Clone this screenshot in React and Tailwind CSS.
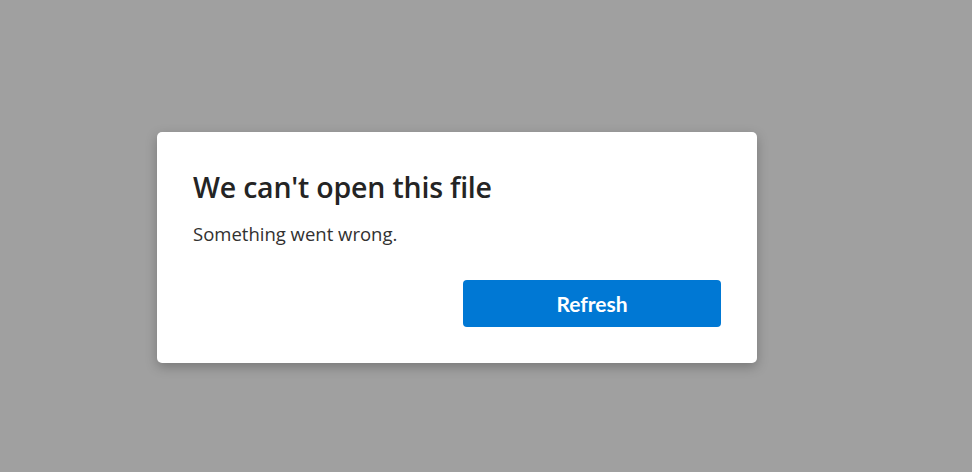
export default function App() {
  return (
    <div className="w-[972px] h-[472px] bg-[#a0a0a0] flex items-start pl-[157px] pt-[132px]" style={{ fontFamily: '"Open Sans", "Noto Sans", sans-serif' }}>
      <div className="w-[600px] h-[231px] bg-white rounded-[5px] shadow-[0_4px_12px_rgba(0,0,0,0.25)] px-9 pt-9 pb-9 flex flex-col">
        <h1 className="text-[28.5px] leading-[38px] font-semibold text-[#242424] tracking-[-0.2px]">We can't open this file</h1>
        <p className="mt-4 text-[18.5px] leading-[24px] text-[#323130]">Something went wrong.</p>
        <div className="mt-auto flex justify-end">
          <button className="w-[258px] h-[47px] rounded-[4px] bg-[#0078d4] text-white text-[21px] font-bold" style={{ fontFamily: 'Lato, "Open Sans", sans-serif' }}>
            Refresh
          </button>
        </div>
      </div>
    </div>
  );
}
